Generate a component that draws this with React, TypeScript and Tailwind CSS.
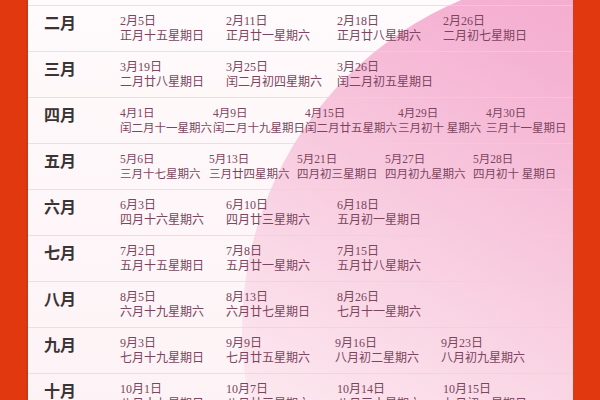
const rows = [
  {
    month: "二月",
    size: "text-[12px]",
    cols: ["w-[106px]", "w-[111px]", "w-[106px]", "w-[106px]"],
    items: [
      ["2月5日", "正月十五星期日"],
      ["2月11日", "正月廿一星期六"],
      ["2月18日", "正月廿八星期六"],
      ["2月26日", "二月初七星期日"],
    ],
  },
  {
    month: "三月",
    size: "text-[12px]",
    cols: ["w-[106px]", "w-[111px]", "w-[106px]"],
    items: [
      ["3月19日", "二月廿八星期日"],
      ["3月25日", "闰二月初四星期六"],
      ["3月26日", "闰二月初五星期日"],
    ],
  },
  {
    month: "四月",
    size: "text-[11.5px]",
    cols: ["w-[93px]", "w-[92px]", "w-[93px]", "w-[88px]", "w-[88px]"],
    items: [
      ["4月1日", "闰二月十一星期六"],
      ["4月9日", "闰二月十九星期日"],
      ["4月15日", "闰二月廿五星期六"],
      ["4月29日", "三月初十 星期六"],
      ["4月30日", "三月十一星期日"],
    ],
  },
  {
    month: "五月",
    size: "text-[11.5px]",
    cols: ["w-[89px]", "w-[88px]", "w-[88px]", "w-[88px]", "w-[88px]"],
    items: [
      ["5月6日", "三月十七星期六"],
      ["5月13日", "三月廿四星期六"],
      ["5月21日", "四月初三星期日"],
      ["5月27日", "四月初九星期六"],
      ["5月28日", "四月初十 星期日"],
    ],
  },
  {
    month: "六月",
    size: "text-[12px]",
    cols: ["w-[106px]", "w-[111px]", "w-[106px]"],
    items: [
      ["6月3日", "四月十六星期六"],
      ["6月10日", "四月廿三星期六"],
      ["6月18日", "五月初一星期日"],
    ],
  },
  {
    month: "七月",
    size: "text-[12px]",
    cols: ["w-[106px]", "w-[111px]", "w-[106px]"],
    items: [
      ["7月2日", "五月十五星期日"],
      ["7月8日", "五月廿一星期六"],
      ["7月15日", "五月廿八星期六"],
    ],
  },
  {
    month: "八月",
    size: "text-[12px]",
    cols: ["w-[106px]", "w-[111px]", "w-[106px]"],
    items: [
      ["8月5日", "六月十九星期六"],
      ["8月13日", "六月廿七星期日"],
      ["8月26日", "七月十一星期六"],
    ],
  },
  {
    month: "九月",
    size: "text-[12px]",
    cols: ["w-[106px]", "w-[109px]", "w-[106px]", "w-[106px]"],
    items: [
      ["9月3日", "七月十九星期日"],
      ["9月9日", "七月廿五星期六"],
      ["9月16日", "八月初二星期六"],
      ["9月23日", "八月初九星期六"],
    ],
  },
  {
    month: "十月",
    size: "text-[12px]",
    cols: ["w-[106px]", "w-[111px]", "w-[106px]", "w-[106px]"],
    items: [
      ["10月1日", "八月十七星期日"],
      ["10月7日", "八月廿三星期六"],
      ["10月14日", "八月三十星期六"],
      ["10月15日", "九月初一星期日"],
    ],
  },
];

export default function App() {
  return (
    <div
      className="flex h-[400px] w-[600px] overflow-hidden bg-[#e2380f] pl-[26px] pr-[27px]"
      style={{ fontFamily: '"Liberation Serif", "Noto Sans CJK SC", serif' }}
    >
      <div className="relative flex-1 overflow-hidden border-l-2 border-[#c9381c] bg-[linear-gradient(180deg,#fffafb_0%,#fdf3f6_100%)]">
        {/* big pink disc behind the table, fading out toward the bottom-left */}
        <div className="absolute left-[214px] top-[-28px] size-[716px] rounded-full bg-[linear-gradient(210deg,#f29dc7_0%,#f5b3d3_30%,#f9d3e3_55%,#fce6ee_72%,#fdf2f5_88%)]" />

        <div className="relative flex flex-col pt-[5px]">
          {rows.map((r) => (
            <div
              key={r.month}
              className="flex h-[46px] shrink-0 items-center border-t border-[#e6d3da]/70"
            >
              <div className="mb-[10px] w-[92px] shrink-0 pl-[16px] text-[16px] font-semibold leading-[20px] text-[#3b3434]">
                {r.month}
              </div>
              <div className="flex">
                {r.items.map(([d, l], i) => (
                  <div
                    key={d}
                    className={`${r.cols[i]} shrink-0 whitespace-pre ${r.size} leading-[14.5px] text-[#7b4560]`}
                  >
                    <div>{d}</div>
                    <div>{l}</div>
                  </div>
                ))}
              </div>
            </div>
          ))}
        </div>
      </div>
    </div>
  );
}
